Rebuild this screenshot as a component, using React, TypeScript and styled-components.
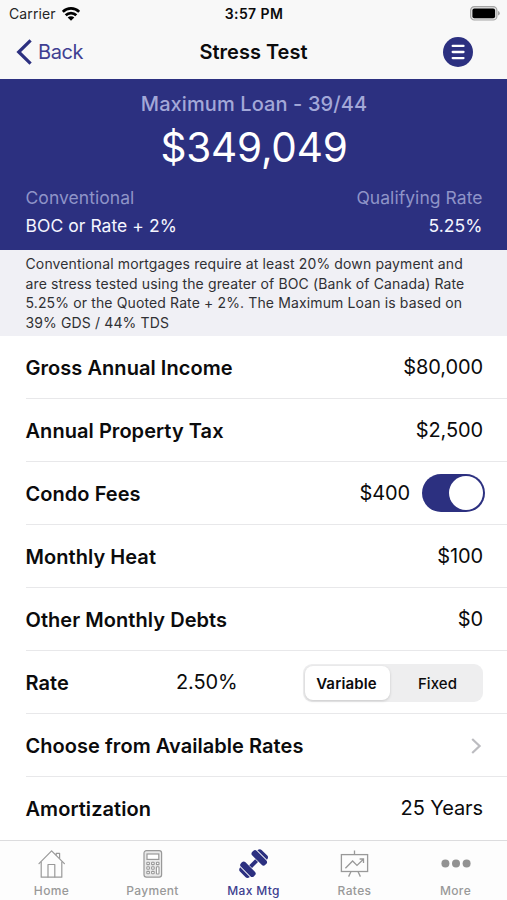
import React from "react";
import styled, { createGlobalStyle } from "styled-components";

const NAVY = "#2c3080";

const GlobalStyle = createGlobalStyle`
  *, *::before, *::after { box-sizing: border-box; }
  html, body { margin: 0; padding: 0; background: #fff; }
  body { font-family: Inter, "Liberation Sans", sans-serif; color: #0b0b0c; overflow: hidden; }
  button { font: inherit; border: 0; padding: 0; background: none; color: inherit; }
`;

const Screen = styled.div`
  width: 507px;
  height: 900px;
  display: flex;
  flex-direction: column;
  background: #fff;
  white-space: nowrap;
`;

const Header = styled.header`
  height: 79px;
  flex: none;
  background: #f8f8f8;
`;

const StatusBar = styled.div`
  height: 27px;
  display: grid;
  grid-template-columns: 1fr auto 1fr;
  align-items: center;
  padding: 0 7px 0 9px;
  line-height: 20px;
`;

const Carrier = styled.div`
  display: flex;
  align-items: center;
  gap: 6px;
  font-size: 14px;
  letter-spacing: 0.1px;
  color: #262626;
`;

const Clock = styled.div`
  font-size: 14px;
  font-weight: 600;
  letter-spacing: 0.4px;
  padding-right: 1px;
`;

const BatterySlot = styled.div`
  display: flex;
  justify-content: flex-end;
`;

const NavBar = styled.div`
  height: 50px;
  display: grid;
  grid-template-columns: 1fr auto 1fr;
  align-items: center;
  padding: 0 34px 0 16px;
`;

const BackButton = styled.button`
  display: flex;
  align-items: center;
  gap: 6px;
  font-size: 20px;
  line-height: 26px;
  letter-spacing: -0.4px;
  color: #403f92;
`;

const NavTitle = styled.h1`
  margin: 0 -9px 0 9px;
  font-size: 20px;
  line-height: 26px;
  font-weight: 600;
`;

const MenuButton = styled.button`
  justify-self: end;
  display: flex;
`;

const Hero = styled.section`
  height: 171px;
  flex: none;
  padding: 12px 24.5px 0 25.5px;
  background: ${NAVY};
  color: #fff;
`;

const HeroTitle = styled.div`
  text-align: center;
  font-size: 20px;
  line-height: 26px;
  font-weight: 500;
  letter-spacing: 0.1px;
  color: #a3a8d8;
`;

const HeroAmount = styled.div`
  text-align: center;
  font-size: 40.5px;
  line-height: 50px;
  margin-top: 6px;
  letter-spacing: -0.2px;
`;

const HeroRow = styled.div<{ $muted?: boolean }>`
  display: flex;
  justify-content: space-between;
  height: 28px;
  line-height: 28px;
  margin-top: ${(p) => (p.$muted ? "11px" : "0")};
  font-size: 17.5px;
  letter-spacing: 0.05px;
  color: ${(p) => (p.$muted ? "#8f94c8" : "#f5f6ff")};
`;

const Note = styled.p`
  height: 86px;
  flex: none;
  margin: 0;
  padding: 4px 25.5px 0;
  background: #f0f0f5;
  color: #303034;
  font-size: 14px;
  line-height: 19.7px;
  letter-spacing: 0.13px;
`;

const Form = styled.main`
  flex: none;
  height: 504px;
  display: grid;
  grid-template-rows: repeat(8, 1fr);
  padding-left: 25.5px;
`;

const Row = styled.div`
  display: flex;
  align-items: center;
  justify-content: space-between;
  padding: 1.5px 24px 0 0;
  border-bottom: 1px solid #e8e8ea;
  &:last-child { border-bottom: 0; padding-top: 0; }
`;

const Label = styled.span<{ $width?: number }>`
  font-size: 20px;
  line-height: 26px;
  font-weight: 600;
  letter-spacing: 0.05px;
  width: ${(p) => (p.$width ? `${p.$width}px` : "auto")};
`;

const Value = styled.span`
  font-size: 20px;
  line-height: 26px;
  letter-spacing: -0.1px;
  padding-bottom: 2px;
`;

const ToggleGroup = styled.div`
  display: flex;
  align-items: center;
  gap: 12px;
  margin: -2px -2px 0 0;
  & > span { padding-bottom: 0; }
`;

const Switch = styled.button`
  width: 63px;
  height: 38px;
  border-radius: 19px;
  background: ${NAVY};
  display: flex;
  align-items: center;
  justify-content: flex-end;
  padding-right: 2px;
`;

const Knob = styled.span`
  width: 34px;
  height: 34px;
  border-radius: 50%;
  background: #fff;
`;

const Segmented = styled.div`
  margin-left: auto;
  width: 180px;
  height: 38px;
  padding: 2px;
  display: grid;
  grid-template-columns: 85px 1fr;
  border-radius: 9px;
  background: #eeeeef;
`;

const Segment = styled.button<{ $active?: boolean }>`
  padding-top: 2px;
  border-radius: 8px;
  font-size: 15px;
  line-height: 20px;
  font-weight: ${(p) => (p.$active ? 600 : 500)};
  letter-spacing: ${(p) => (p.$active ? "0.15px" : "0.1px")};
  padding-right: ${(p) => (p.$active ? "2px" : "0")};
  padding-left: ${(p) => (p.$active ? "0" : "4px")};
  background: ${(p) => (p.$active ? "#fff" : "transparent")};
  box-shadow: ${(p) => (p.$active ? "0 1px 3px rgba(0, 0, 0, 0.16)" : "none")};
`;

const TabBar = styled.nav`
  height: 60px;
  flex: none;
  display: grid;
  grid-template-columns: repeat(5, 101px);
  justify-content: center;
  border-top: 1px solid #dcdcde;
  background: #fdfdfd;
`;

const Tab = styled.button<{ $active?: boolean }>`
  display: flex;
  flex-direction: column;
  align-items: center;
  padding-top: 8px;
  gap: 4px;
  font-size: 12px;
  line-height: 16px;
  font-weight: 500;
  letter-spacing: 0.35px;
  color: ${(p) => (p.$active ? "#3d408f" : "#999")};
`;

const WifiIcon = () => (
  <svg width="18" height="14" viewBox="0 0 18 14" fill="none" stroke="#000" strokeWidth="2.7">
    <path d="M0.8 4.9 A11.5 11.5 0 0 1 17.2 4.9" />
    <path d="M3.7 8.3 A7.4 7.4 0 0 1 14.3 8.3" />
    <path d="M9 13.8 L5.7 10.6 A4.6 4.6 0 0 1 12.3 10.6 Z" fill="#000" stroke="none" />
  </svg>
);

const BatteryIcon = () => (
  <svg width="30" height="15" viewBox="0 0 30 15">
    <rect x="0.6" y="0.6" width="26.3" height="13.4" rx="3.8" fill="#e4e4e4" stroke="#a5a5a5" strokeWidth="1.2" />
    <rect x="2.4" y="2.4" width="22.7" height="9.8" rx="2" fill="#000" />
    <path d="M28 5 Q29.8 5.4 29.8 7.3 Q29.8 9.2 28 9.6 Z" fill="#a5a5a5" />
  </svg>
);

const BackIcon = () => (
  <svg width="16" height="26" viewBox="0 0 16 26" fill="none" stroke={NAVY} strokeWidth="3.2">
    <path d="M14.6 1.3 L2.7 13 L14.6 24.7" />
  </svg>
);

const MenuIcon = () => (
  <svg width="30" height="30" viewBox="0 0 30 30">
    <circle cx="15" cy="15" r="15" fill={NAVY} />
    <path d="M9.7 8.9h10.8M9.7 15h10.8M9.7 21.1h10.8" stroke="#fff" strokeWidth="2.3" strokeLinecap="round" />
  </svg>
);

const ChevronIcon = () => (
  <svg width="12" height="16" viewBox="0 0 12 16" fill="none" stroke="#bcbcc0" strokeWidth="2.2">
    <path d="M1.2 1 L8.6 8 L1.2 15" />
  </svg>
);

const HomeIcon = () => (
  <svg width="28" height="30" viewBox="0 0 28 30" fill="none" stroke="#999" strokeWidth="1.2" strokeLinejoin="round" strokeLinecap="round">
    <path d="M1 14.6 L13.6 1.8 L26.4 14.6" />
    <path d="M3.2 13 V28.2 H23.8 V13" />
    <path d="M10 28 V15.5 H16.8 V28" />
    <path d="M18.2 6 V4.3 H21.6 V9.2" />
  </svg>
);

const CalculatorIcon = () => (
  <svg width="20" height="30" viewBox="0 0 20 30" fill="none" stroke="#999" strokeWidth="1.2">
    <rect x="1" y="1.6" width="17.6" height="26.6" rx="2.4" fill="#e9e9e9" />
    <rect x="4" y="5" width="11.8" height="5.4" fill="#fff" />
    <g fill="#fff" strokeWidth="1.1">
      {[13.2, 17.8, 22.4].map((y) => (
        <React.Fragment key={y}>
          <rect x="3.8" y={y} width="2.6" height="2.4" rx="0.7" />
          <rect x="8.6" y={y} width="2.6" height="2.4" rx="0.7" />
        </React.Fragment>
      ))}
      <rect x="13.4" y="13.2" width="2.6" height="2.4" rx="0.7" />
      <rect x="13.4" y="17.8" width="2.6" height="7.2" rx="0.8" />
    </g>
  </svg>
);

const DumbbellIcon = () => (
  <svg width="30" height="30" viewBox="0 0 30 30">
    <g transform="translate(14.6 14.6) rotate(-45)" fill={NAVY}>
      <rect x="-4.2" y="-2" width="8.4" height="4" />
      <rect x="-11.2" y="-9.2" width="6.4" height="18.4" rx="2.6" />
      <rect x="4.8" y="-9.2" width="6.4" height="18.4" rx="2.6" />
      <path d="M-12.1 -6.8 V6.8 Q-15.3 6.4 -15.3 4 V-4 Q-15.3 -6.4 -12.1 -6.8Z" />
      <path d="M12.1 -6.8 V6.8 Q15.3 6.4 15.3 4 V-4 Q15.3 -6.4 12.1 -6.8Z" />
    </g>
  </svg>
);

const RatesIcon = () => (
  <svg width="30" height="30" viewBox="0 0 30 30" fill="none" stroke="#999" strokeWidth="1.3">
    <rect x="1.4" y="5.6" width="26.2" height="16.9" />
    <path d="M14.5 1.6 V5.6 M11 22.5 L8.6 27.6 M18 22.5 L20.4 27.6" />
    <path d="M5.4 19.2 L12.6 12 L17 16.4 L23.4 10.2 M19.6 10 H23.5 V13.9" />
  </svg>
);

const MoreIcon = () => (
  <svg width="30" height="30" viewBox="0 0 30 30" fill="#929292">
    <circle cx="4.4" cy="14.6" r="4" />
    <circle cx="15" cy="14.6" r="4" />
    <circle cx="25.6" cy="14.6" r="4" />
  </svg>
);

const tabs = [
  { name: "Home", Icon: HomeIcon },
  { name: "Payment", Icon: CalculatorIcon },
  { name: "Max Mtg", Icon: DumbbellIcon, active: true },
  { name: "Rates", Icon: RatesIcon },
  { name: "More", Icon: MoreIcon },
];

export default function App() {
  return (
    <>
      <GlobalStyle />
      <Screen>
        <Header>
          <StatusBar>
            <Carrier>Carrier <WifiIcon /></Carrier>
            <Clock>3:57 PM</Clock>
            <BatterySlot><BatteryIcon /></BatterySlot>
          </StatusBar>
          <NavBar>
            <BackButton><BackIcon />Back</BackButton>
            <NavTitle>Stress Test</NavTitle>
            <MenuButton aria-label="Menu"><MenuIcon /></MenuButton>
          </NavBar>
        </Header>
        <Hero>
          <HeroTitle>Maximum Loan - 39/44</HeroTitle>
          <HeroAmount>$349,049</HeroAmount>
          <HeroRow $muted><span>Conventional</span><span>Qualifying Rate</span></HeroRow>
          <HeroRow><span>BOC or Rate + 2%</span><span>5.25%</span></HeroRow>
        </Hero>
        <Note>
          Conventional mortgages require at least 20% down payment and<br />
          are stress tested using the greater of BOC (Bank of Canada) Rate<br />
          5.25% or the Quoted Rate + 2%. The Maximum Loan is based on<br />
          39% GDS / 44% TDS
        </Note>
        <Form>
          <Row><Label>Gross Annual Income</Label><Value>$80,000</Value></Row>
          <Row><Label>Annual Property Tax</Label><Value>$2,500</Value></Row>
          <Row>
            <Label>Condo Fees</Label>
            <ToggleGroup>
              <Value>$400</Value>
              <Switch role="switch" aria-checked="true" aria-label="Condo Fees"><Knob /></Switch>
            </ToggleGroup>
          </Row>
          <Row><Label>Monthly Heat</Label><Value>$100</Value></Row>
          <Row><Label>Other Monthly Debts</Label><Value>$0</Value></Row>
          <Row>
            <Label $width={150.5}>Rate</Label>
            <Value>2.50%</Value>
            <Segmented>
              <Segment $active>Variable</Segment>
              <Segment>Fixed</Segment>
            </Segmented>
          </Row>
          <Row><Label>Choose from Available Rates</Label><ChevronIcon /></Row>
          <Row><Label>Amortization</Label><Value>25 Years</Value></Row>
        </Form>
        <TabBar>
          {tabs.map(({ name, Icon, active }) => (
            <Tab key={name} $active={active}><Icon />{name}</Tab>
          ))}
        </TabBar>
      </Screen>
    </>
  );
}
